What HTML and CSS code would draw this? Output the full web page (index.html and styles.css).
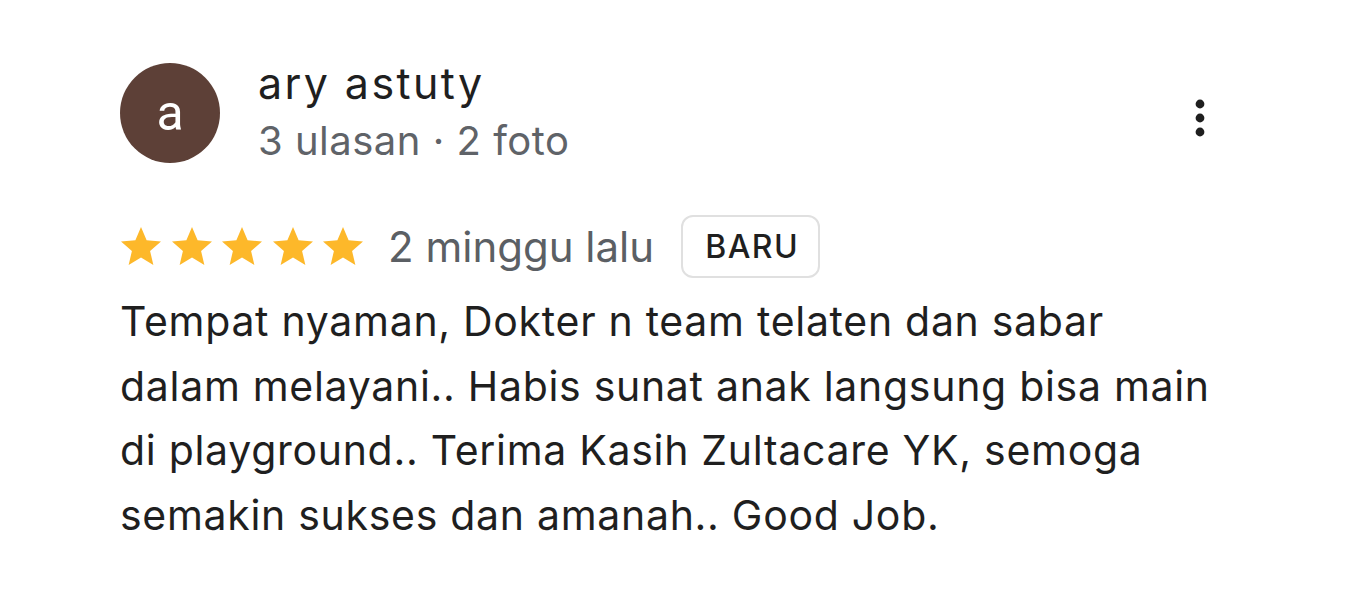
FILE: index.html
```html
<!DOCTYPE html>
<html lang="id">
  <head>
    <meta charset="UTF-8" />
    <meta name="viewport" content="width=device-width, initial-scale=1.0" />
    <title>Ulasan</title>
    <link rel="stylesheet" href="styles.css">
  </head>
  <body>
    <div class="review">
      <div class="review-header">
        <div class="avatar">a</div>
        <div class="author">
          <div class="author-name">ary astuty</div>
          <div class="author-meta">3 ulasan · 2 foto</div>
        </div>
        <button class="more-btn" aria-label="Opsi lainnya">
          <svg viewBox="0 0 24 24" width="48" height="48">
            <circle cx="12" cy="5" r="2.2" />
            <circle cx="12" cy="12" r="2.2" />
            <circle cx="12" cy="19" r="2.2" />
          </svg>
        </button>
      </div>

      <div class="review-meta">
        <div class="stars">
          <svg class="star" viewBox="0 0 24 24"><path d="M12 17.27L18.18 21l-1.64-7.03L22 9.24l-7.19-.61L12 2 9.19 8.63 2 9.240l5.46 4.73L5.82 21z"/></svg>
          <svg class="star" viewBox="0 0 24 24"><path d="M12 17.27L18.18 21l-1.64-7.03L22 9.24l-7.19-.61L12 2 9.19 8.63 2 9.24l5.46 4.73L5.82 21z"/></svg>
          <svg class="star" viewBox="0 0 24 24"><path d="M12 17.27L18.18 21l-1.64-7.03L22 9.24l-7.19-.61L12 2 9.19 8.63 2 9.24l5.46 4.73L5.82 21z"/></svg>
          <svg class="star" viewBox="0 0 24 24"><path d="M12 17.27L18.18 21l-1.64-7.03L22 9.24l-7.19-.61L12 2 9.19 8.63 2 9.24l5.46 4.73L5.82 21z"/></svg>
          <svg class="star" viewBox="0 0 24 24"><path d="M12 17.27L18.18 21l-1.64-7.03L22 9.24l-7.19-.61L12 2 9.19 8.63 2 9.24l5.46 4.73L5.82 21z"/></svg>
        </div>
        <span class="review-date">2 minggu lalu</span>
        <span class="badge">BARU</span>
      </div>

      <p class="review-text">Tempat nyaman, Dokter n team telaten dan sabar dalam melayani.. Habis sunat anak langsung bisa main di playground.. Terima Kasih Zultacare YK, semoga semakin sukses dan amanah.. Good Job.</p>
    </div>
  </body>
</html>
```

FILE: styles.css
```css
body {
  margin: 0;
  background-color: #fff;
  color: #1f1f1f;
  font-family: Inter, Roboto, "Noto Sans", sans-serif;
}
.review {
  width: 1110px;
  padding: 52px 0 0 120px;
}
.review-header {
  display: flex;
  align-items: flex-start;
}
.avatar {
  width: 100px;
  height: 100px;
  margin-top: 11px;
  border-radius: 50%;
  background-color: #5d4037;
  color: #fff;
  font-family: Roboto, sans-serif;
  font-size: 50px;
  display: flex;
  justify-content: center;
  align-items: center;
  flex-shrink: 0;
}
.author {
  flex: 1;
  margin-left: 38px;
}
.author-name {
  font-size: 43px;
  line-height: 62px;
  letter-spacing: 2.4px;
  color: #1f1f1f;
}
.author-meta {
  padding-top: 3px;
  font-size: 40px;
  line-height: 48px;
  letter-spacing: 0.5px;
  color: #5f6368;
}
.more-btn {
  width: 60px;
  height: 60px;
  margin-top: 36px;
  padding: 0;
  border: none;
  background: transparent;
  display: flex;
  justify-content: center;
  align-items: center;
  fill: #1f1f1f;
  cursor: pointer;
}
.review-meta {
  display: flex;
  align-items: center;
  margin-top: 50px;
  height: 63px;
}
.stars {
  display: flex;
  gap: 2.5px;
  margin-left: -3px;
}
.star {
  width: 48px;
  height: 48px;
  fill: #fdb82a;
}
.review-date {
  margin-left: 21px;
  font-size: 42px;
  color: #5b5f64;
}
.badge {
  margin-left: 27px;
  height: 59px;
  padding: 0 19px 0 22px;
  border: 2px solid #e0e0e0;
  border-radius: 12px;
  display: flex;
  align-items: center;
  font-size: 32px;
  font-weight: 500;
  letter-spacing: 1.5px;
  color: #1f1f1f;
}
.review-text {
  margin: 11px 0 0;
  padding-right: 6px;
  font-size: 41px;
  line-height: 64.5px;
  letter-spacing: 0.7px;
  color: #1f1f1f;
}
```
